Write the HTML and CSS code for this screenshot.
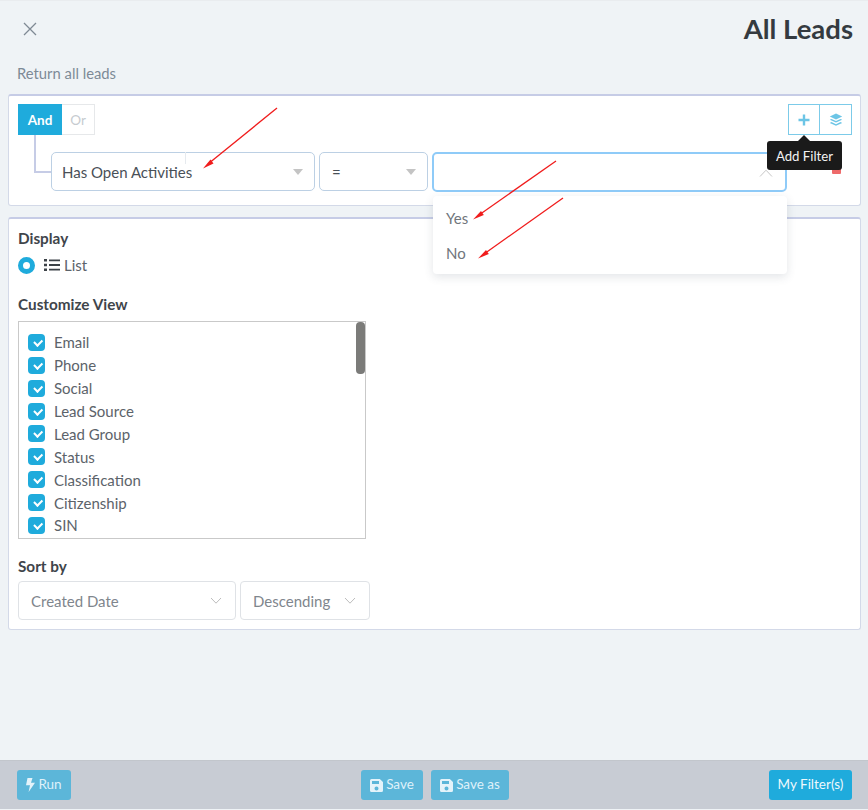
FILE: index.html
```html
<!DOCTYPE html>
<html lang="en">
<head>
<meta charset="utf-8">
<title>All Leads</title>
<link rel="stylesheet" href="styles.css">
</head>
<body>
<div class="page">
  <header class="head">
    <svg class="close" width="14" height="14" viewBox="0 0 14 14"><path d="M1 1l12 12M13 1L1 13" stroke="#7f8a94" stroke-width="1.3" fill="none"/></svg>
    <h1 class="title">All Leads</h1>
  </header>
  <p class="sub">Return all leads</p>

  <section class="card rules">
    <div class="rule-top">
      <div class="toggle"><span class="tg on">And</span><span class="tg off">Or</span></div>
      <div class="tools">
        <span class="tool"><svg width="14" height="14" viewBox="0 0 14 14"><path d="M7 1.5v11M1.5 7h11" stroke="#6cc5e6" stroke-width="2.4" fill="none"/></svg></span>
        <span class="tool tool-r"><svg width="14" height="14" viewBox="0 0 14 14"><path fill="#6cc5e6" d="M7 .6l6.2 2.9L7 6.4.8 3.5z M2.5 5.9L7 8l4.5-2.1 1.7.8L7 9.6.8 6.7z M2.5 9.1L7 11.2l4.5-2.1 1.7.8L7 12.8.8 9.9z"/></svg></span>
      </div>
    </div>
    <div class="rule-row">
      <span class="elbow"></span>
      <div class="sel sel-field">Has Open Activities<i class="caret"></i></div>
      <div class="sel sel-op">=<i class="caret"></i></div>
      <div class="sel sel-val"><svg class="chev" width="14" height="8" viewBox="0 0 14 8"><path d="M1 7.5L7 1.2l6 6.3" stroke="#c6c6c6" fill="none"/></svg></div>
      <span class="del"></span>
    </div>
  </section>

  <section class="card view">
    <h2 class="lbl">Display</h2>
    <div class="radio-row">
      <span class="radio"></span>
      <svg class="list-ic" width="16" height="14" viewBox="0 0 16 14"><path fill="#3c4248" d="M0 1h3v2.600H0zM0 5.700h3v2.600H0zM0 10.400h3V13H0zM5 1.400h11v1.800H5zM5 6.100h11v1.800H5zM5 10.800h11v1.800H5z"/></svg>
      <span class="radio-txt">List</span>
    </div>
    <h2 class="lbl lbl-cv">Customize View</h2>
    <div class="listbox">
      <span class="thumb"></span>
      <label class="chk"><i class="box"></i>Email</label>
      <label class="chk"><i class="box"></i>Phone</label>
      <label class="chk"><i class="box"></i>Social</label>
      <label class="chk"><i class="box"></i>Lead Source</label>
      <label class="chk"><i class="box"></i>Lead Group</label>
      <label class="chk"><i class="box"></i>Status</label>
      <label class="chk"><i class="box"></i>Classification</label>
      <label class="chk"><i class="box"></i>Citizenship</label>
      <label class="chk"><i class="box"></i>SIN</label>
    </div>
    <h2 class="lbl lbl-sort">Sort by</h2>
    <div class="sort-row">
      <div class="sort sort-a">Created Date<svg width="12" height="7" viewBox="0 0 12 7"><path d="M1 1l5 5.200L11 1" stroke="#bcbcbc" fill="none"/></svg></div>
      <div class="sort sort-b">Descending<svg width="12" height="7" viewBox="0 0 12 7"><path d="M1 1l5 5.200L11 1" stroke="#bcbcbc" fill="none"/></svg></div>
    </div>
  </section>

  <footer class="foot">
    <button class="btn dim btn-run"><svg width="9" height="14" viewBox="0 0 9 14"><path fill="#e4f3fa" d="M1.500 0h5L5 4.800h4L2.600 14l1.400-6.800H0z"/></svg><span class="btn-txt">Run</span></button>
    <div class="foot-mid">
      <button class="btn dim btn-save"><svg width="13" height="13" viewBox="0 0 13 13"><path fill="#e4f3fa" fill-rule="evenodd" d="M1.500 0h8.300L13 3v8.500A1.500 1.500 0 0 1 11.500 13h-10A1.500 1.500 0 0 1 0 11.500v-10A1.500 1.500 0 0 1 1.500 0zM2 2v3h7V2zM6.500 7.500a2 2 0 1 0 0 4 2 2 0 0 0 0-4z"/></svg><span class="btn-txt">Save</span></button>
      <button class="btn dim btn-saveas"><svg width="13" height="13" viewBox="0 0 13 13"><path fill="#e4f3fa" fill-rule="evenodd" d="M1.500 0h8.300L13 3v8.500A1.500 1.500 0 0 1 11.500 13h-10A1.500 1.500 0 0 1 0 11.500v-10A1.500 1.500 0 0 1 1.500 0zM2 2v3h7V2zM6.500 7.500a2 2 0 1 0 0 4 2 2 0 0 0 0-4z"/></svg><span class="btn-txt">Save as</span></button>
    </div>
    <button class="btn solid btn-filters"><span class="btn-txt">My Filter(s)</span></button>
  </footer>

  <div class="menu">
    <div class="opt">Yes</div>
    <div class="opt">No</div>
  </div>
  <div class="tip">Add Filter</div>

  <svg class="arrows" width="868" height="810" viewBox="0 0 868 810">
    <path d="M185.500 152v12" stroke="#e6eaee" fill="none"/>
    <g stroke="#f01c1c" stroke-width="1.300" fill="#f01c1c">
      <path d="M277 108L208 164" fill="none"/><path stroke="none" d="M203 168.500l7.500-9 3 4z"/>
      <path d="M556 161L479 215" fill="none"/><path stroke="none" d="M473 219.500l8-8.500 2.800 4z"/>
      <path d="M563 198L484 254" fill="none"/><path stroke="none" d="M478 258.500l8-8.500 2.800 4z"/>
    </g>
  </svg>
</div>
</body>
</html>
```
FILE: styles.css
```css
* { box-sizing: border-box; }
html, body { margin: 0; padding: 0; }
body {
  font-family: Lato, "Noto Sans", sans-serif;
  font-size: 15px;
  color: #5c636a;
  background: #eff3f6;
}
.page {
  position: relative;
  width: 868px;
  height: 810px;
  overflow: hidden;
  display: flex;
  flex-direction: column;
  border-top: 1px solid #e9ecef;
}
.head {
  display: flex;
  justify-content: space-between;
  align-items: center;
  height: 56px;
  padding: 0 15px 0 23px;
}
.title { margin: 0; font-size: 27.500px; line-height: 58px; font-weight: 700; color: #343a40; }
.sub { margin: 6px 0 0 17px; font-size: 14.800px; line-height: 21px; color: #7d8a96; height: 31px; }
.card {
  margin: 0 7px 0 8px;
  background: #fff;
  border: 1px solid #d3d9e8;
  border-top: 2px solid #c6cce6;
  border-radius: 3px;
}
.rules { height: 112px; padding: 8px 8px 0 9px; }
.rule-top { display: flex; justify-content: space-between; height: 31px; }
.toggle { display: flex; }
.tg { display: flex; align-items: center; justify-content: center; height: 31px; font-size: 13.500px; }
.on { width: 44px; background: #1fabdc; color: #fff; font-weight: 700; }
.off { width: 33px; border: 1px solid #e6e8ea; border-left: 0; color: #c6cbd0; }
.tools { display: flex; }
.tool { display: flex; align-items: center; justify-content: center; width: 32px; height: 31px; border: 1px solid #7ccbe9; }
.tool-r { border-left: 0; }
.rule-row { position: relative; display: flex; gap: 4px; margin-top: 17px; padding-left: 33px; }
.elbow {
  position: absolute;
  left: 16px;
  top: -17px;
  width: 17px;
  height: 38px;
  border-left: 2px solid #c6cce6;
  border-bottom: 2px solid #c6cce6;
}
.sel {
  position: relative;
  display: flex;
  align-items: center;
  height: 39px;
  background: #fff;
  border: 1px solid #bcd0e4;
  border-radius: 5px;
  font-size: 15px;
  color: #495057;
  padding-left: 10px;
}
.sel-field { width: 264px; }
.sel-op { width: 109px; padding-left: 12px; }
.sel-val { width: 355px; height: 40px; border: 2px solid #8fcbf8; }
.caret {
  position: absolute;
  right: 11px;
  top: 16px;
  border-left: 5.500px solid transparent;
  border-right: 5.500px solid transparent;
  border-top: 6px solid #c4c4c4;
}
.chev { position: absolute; right: 12px; top: 15px; }
.del { position: absolute; left: 814px; top: 10px; width: 9px; height: 12px; background: #ee6a6a; border-radius: 1px; }
.view { height: 413px; margin-top: 11px; padding: 9px 9px 0 9px; }
.lbl { margin: 0; font-size: 15.300px; line-height: 20px; font-weight: 700; color: #3f454b; }
.radio-row { display: flex; align-items: center; height: 18px; margin-top: 8px; }
.radio { width: 17px; height: 17px; border-radius: 50%; border: 5px solid #1fabdc; background: #fff; }
.list-ic { margin-left: 9px; }
.radio-txt { margin-left: 4px; font-size: 15px; color: #5c636a; }
.lbl-cv { margin-top: 20px; }
.listbox {
  position: relative;
  width: 348px;
  height: 218px;
  margin-top: 7px;
  padding: 9px 0 0 9px;
  border: 1px solid #c9c9c9;
}
.thumb { position: absolute; right: 0; top: 0; width: 9px; height: 52px; background: #7b7b79; border-radius: 4px; }
.chk { display: flex; align-items: center; height: 22.875px; font-size: 15px; color: #5c636a; }
.box {
  position: relative;
  width: 17px;
  height: 17px;
  margin-right: 9px;
  background: #1fabdc;
  border-radius: 4px;
}
.box::after {
  content: "";
  position: absolute;
  left: 5.500px;
  top: 5px;
  width: 6px;
  height: 3.500px;
  border-left: 2px solid #fff;
  border-bottom: 2px solid #fff;
  transform: rotate(-45deg);
}
.lbl-sort { margin-top: 17px; }
.sort-row { display: flex; gap: 4px; margin-top: 5px; }
.sort {
  display: flex;
  align-items: center;
  justify-content: space-between;
  height: 39px;
  padding: 0 13px 0 12px;
  border: 1px solid #dfe2e6;
  border-radius: 4px;
  font-size: 15px;
  color: #7f868d;
}
.sort-a { width: 218px; }
.sort-b { width: 130px; }
.foot {
  position: absolute;
  left: 0;
  right: 0;
  top: 759px;
  height: 49px;
  display: flex;
  justify-content: space-between;
  align-items: center;
  padding: 0 16px 0 17px;
  background: #c8ccd4;
  border-top: 1px solid #c2c6cc;
}
.foot-mid { display: flex; gap: 8px; margin-left: 30px; }
.btn {
  display: flex;
  align-items: center;
  justify-content: center;
  gap: 3px;
  height: 30px;
  padding: 0;
  border: 0;
  border-radius: 3px;
  font-family: inherit;
  font-size: 13.500px;
  white-space: nowrap;
}
.btn-txt { padding-bottom: 2px; }
.dim { background: #5cb6d9; color: #dff1f9; }
.solid { background: #1fabdc; color: #eef9fd; }
.btn-run { width: 54px; }
.btn-save { width: 62px; }
.btn-saveas { width: 78px; }
.btn-filters { width: 83px; }
.menu {
  position: absolute;
  left: 433px;
  top: 195px;
  width: 354px;
  height: 78px;
  padding-top: 5px;
  background: #fff;
  border-radius: 4px;
  box-shadow: 0 3px 10px rgba(60, 70, 90, .14);
}
.opt { height: 35px; line-height: 34px; padding-left: 13px; font-size: 15px; color: #70767c; }
.tip {
  position: absolute;
  left: 767px;
  top: 140px;
  width: 75px;
  height: 29px;
  line-height: 30px;
  text-align: center;
  background: #1a1a1a;
  color: #f2f2f2;
  font-size: 13.200px;
  border-radius: 3px;
}
.tip::before {
  content: "";
  position: absolute;
  left: 31px;
  top: -6px;
  border-left: 6px solid transparent;
  border-right: 6px solid transparent;
  border-bottom: 6px solid #1a1a1a;
}
.arrows { position: absolute; left: 0; top: -1px; pointer-events: none; }
```
